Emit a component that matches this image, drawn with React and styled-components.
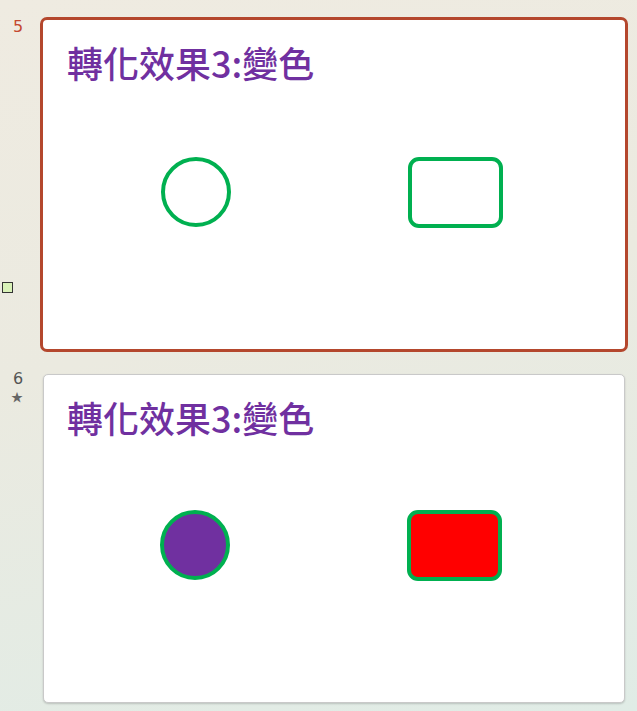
import React from 'react';
import styled, { createGlobalStyle } from 'styled-components';

const GlobalStyle = createGlobalStyle`
  html, body {
    margin: 0;
    padding: 0;
  }
  body {
    width: 637px;
    height: 711px;
    overflow: hidden;
    background: linear-gradient(168deg, #efebe1 0%, #ebeae0 45%, #e0ece6 100%);
    font-family: "Noto Sans", "Noto Sans CJK TC", sans-serif;
  }
`;

const Pane = styled.div`
  display: flex;
  flex-direction: column;
  gap: 19px;
  padding-top: 17px;
`;

const Row = styled.div`
  display: flex;
`;

const Gutter = styled.div`
  position: relative;
  width: 40px;
  flex: 0 0 40px;
  display: flex;
  flex-direction: column;
  align-items: center;
`;

const Number = styled.div`
  font-family: "DejaVu Sans", sans-serif;
  font-size: 16px;
  line-height: 18px;
  margin-top: ${p => (p.$selected ? '1px' : '-1px')};
  margin-left: -4px;
  color: ${p => (p.$selected ? '#c4482e' : '#555')};
`;

const Star = styled.div`
  font-size: 12px;
  line-height: 12px;
  margin-top: 4px;
  color: #666;
  margin-left: -6px;
`;

const Marker = styled.div`
  position: absolute;
  left: 2px;
  top: 265px;
  width: 9px;
  height: 9px;
  background: #d9f2b8;
  border: 1px solid #333;
`;

const Frame = styled.div`
  width: 588px;
  height: 335px;
  box-sizing: border-box;
  padding: ${p => (p.$selected ? '0' : '3px')};
`;

const Slide = styled.div`
  position: relative;
  box-sizing: border-box;
  width: 100%;
  height: 100%;
  background: #fff;
  border-radius: ${p => (p.$selected ? '7px' : '5px')};
  border: ${p => (p.$selected ? '3px solid #b4472d' : '1px solid #c9c9c9')};
  box-shadow: ${p => (p.$selected ? 'none' : '0 1px 2px rgba(0,0,0,0.18)')};
  padding: ${p => (p.$selected ? '17px 0 0 24px' : '17px 0 0 23px')};
`;

const Title = styled.h1`
  margin: 0;
  font-family: "Noto Sans CJK TC", sans-serif;
  font-size: 36px;
  font-weight: 500;
  line-height: 50px;
  color: #7030a0;
`;

const Circle = styled.div`
  position: absolute;
  left: ${p => p.$x}px;
  top: ${p => p.$y}px;
  width: 70px;
  height: 70px;
  box-sizing: border-box;
  border-radius: 50%;
  border: 4px solid #00b050;
  background: ${p => p.$fill || 'transparent'};
`;

const RoundRect = styled.div`
  position: absolute;
  left: ${p => p.$x}px;
  top: ${p => p.$y}px;
  width: 95px;
  height: 71px;
  box-sizing: border-box;
  border-radius: 11px;
  border: 4px solid #00b050;
  background: ${p => p.$fill || 'transparent'};
`;

function SlideThumb({ selected, circleFill, rectFill }) {
  const o = selected ? 0 : -2;
  return (
    <Frame $selected={selected}>
      <Slide $selected={selected}>
        <Title>轉化效果3:變色</Title>
        <Circle $x={118 + o} $y={137 + o} $fill={circleFill} />
        <RoundRect $x={365 + o} $y={137 + o} $fill={rectFill} />
      </Slide>
    </Frame>
  );
}

export default function App() {
  return (
    <>
      <GlobalStyle />
      <Pane>
        <Row>
          <Gutter>
            <Number $selected>5</Number>
            <Marker />
          </Gutter>
          <SlideThumb selected />
        </Row>
        <Row>
          <Gutter>
            <Number>6</Number>
            <Star>★</Star>
          </Gutter>
          <SlideThumb circleFill="#7030a0" rectFill="#ff0000" />
        </Row>
      </Pane>
    </>
  );
}
